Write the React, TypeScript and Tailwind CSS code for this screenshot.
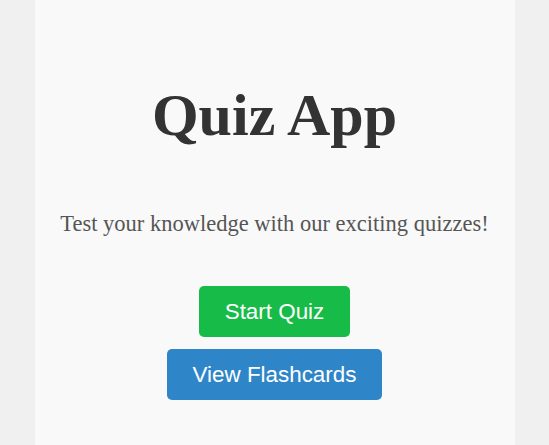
export default function App() {
  return (
    <div className="min-h-screen bg-[#f0f0f0] flex justify-center">
      <div className="w-[480px] min-h-screen bg-[#f9f9f9] flex flex-col items-center text-center pt-[78px]">
        <h1 className="text-[60px] leading-[74px] font-bold text-[#333333]" style={{ fontFamily: '"Liberation Serif", serif' }}>
          Quiz App
        </h1>
        <p className="mt-[59px] text-[22.5px] leading-[26px] text-[#555555]" style={{ fontFamily: '"Liberation Serif", serif' }}>
          Test your knowledge with our exciting quizzes!
        </p>
        <div className="mt-[49px] flex flex-col items-center gap-[12px]" style={{ fontFamily: '"Liberation Sans", Arial, sans-serif' }}>
          <button className="h-[51px] px-[26px] rounded-[5px] bg-[#17bb47] text-white text-[22.4px]">
            Start Quiz
          </button>
          <button className="h-[51px] px-[26px] rounded-[5px] bg-[#2e86c8] text-white text-[22.4px]">
            View Flashcards
          </button>
        </div>
      </div>
    </div>
  );
}
